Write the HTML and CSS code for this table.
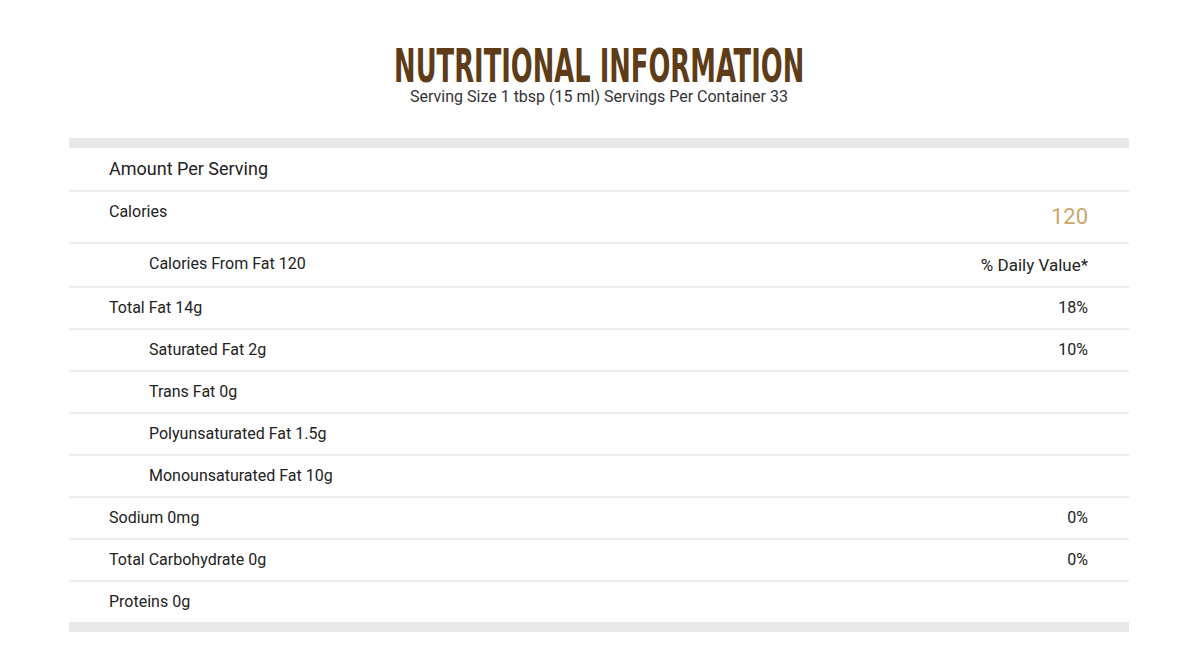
FILE: index.html
```html
<!DOCTYPE html>
<html>
<head>
<meta charset="utf-8">
<link rel="stylesheet" href="styles.css">
</head>
<body>
<div class="page">
  <header class="head">
    <h1 class="title">NUTRITIONAL INFORMATION</h1>
    <p class="sub">Serving Size 1 tbsp (15 ml) Servings Per Container 33</p>
  </header>
  <div class="table">
    <div class="row amount"><span>Amount Per Serving</span></div>
    <div class="row cal"><span>Calories</span><span class="kcal">120</span></div>
    <div class="row sub-row"><span>Calories From Fat 120</span><span class="dv">% Daily Value*</span></div>
    <div class="row"><span>Total Fat 14g</span><span>18%</span></div>
    <div class="row sub-row"><span>Saturated Fat 2g</span><span>10%</span></div>
    <div class="row sub-row"><span>Trans Fat 0g</span></div>
    <div class="row sub-row"><span>Polyunsaturated Fat 1.5g</span></div>
    <div class="row sub-row"><span>Monounsaturated Fat 10g</span></div>
    <div class="row"><span>Sodium 0mg</span><span>0%</span></div>
    <div class="row"><span>Total Carbohydrate 0g</span><span>0%</span></div>
    <div class="row last"><span>Proteins 0g</span></div>
  </div>
</div>
</body>
</html>
```
FILE: styles.css
```css
html, body { margin: 0; padding: 0; background: #fff; }
body { font-family: Roboto, "Liberation Sans", sans-serif; color: #222; }
.page { padding: 43px 60px 0 69px; }
.head { text-align: center; height: 95px; }
.title {
  margin: 0;
  display: inline-block;
  font-family: "DejaVu Sans Condensed", "Liberation Sans", sans-serif;
  font-weight: bold;
  font-size: 46px;
  line-height: 46px;
  color: #5e3c17;
  transform: scaleX(0.623);
  transform-origin: center;
  white-space: nowrap;
}
.sub { margin: 0; font-size: 16px; line-height: 16px; color: #333; }
.table { border-top: 10px solid #e8e8e8; border-bottom: 10px solid #e8e8e8; }
.row {
  display: flex;
  justify-content: space-between;
  align-items: flex-start;
  padding: 11px 41px 11px 40px;
  font-size: 16px;
  line-height: 18px;
  border-bottom: 2px solid #ececec;
}
.row.last { border-bottom: 0; }
.sub-row { padding-left: 80px; }
.amount { font-size: 18px; line-height: 20px; }
.kcal { font-size: 22px; line-height: 28px; color: #c9a66b; }
.dv { font-size: 17px; line-height: 20px; }
```
